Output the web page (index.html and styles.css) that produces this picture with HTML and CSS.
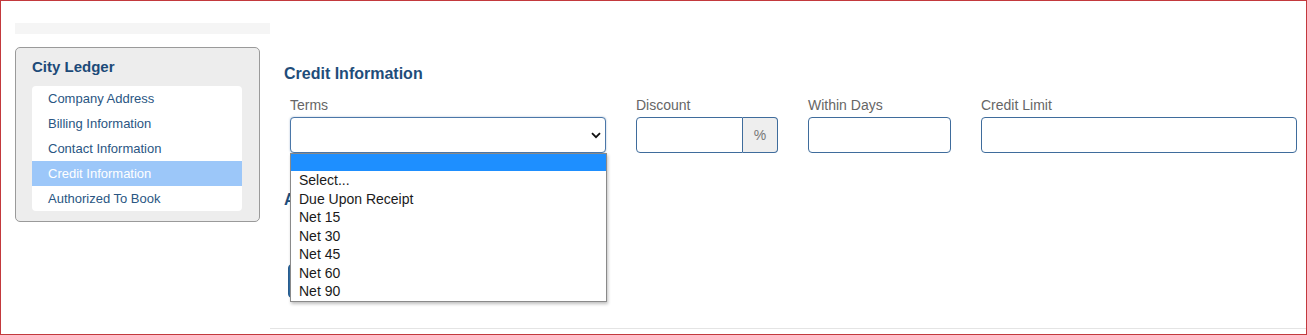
FILE: index.html
```html
<!DOCTYPE html>
<html lang="en">
<head>
    <meta charset="UTF-8">
    <meta name="viewport" content="width=device-width, initial-scale=1.0">
    <title>City Ledger - Credit Information</title>
    <link rel="stylesheet" href="styles.css">
</head>
<body>
    <div class="frame">
        <div class="sidebar">
            <div class="top-bar"></div>
            <div class="panel">
                <div class="panel-title">City Ledger</div>
                <ul class="nav-list">
                    <li>Company Address</li>
                    <li>Billing Information</li>
                    <li>Contact Information</li>
                    <li class="active">Credit Information</li>
                    <li>Authorized To Book</li>
                </ul>
            </div>
        </div>

        <div class="main">
            <h2 class="section-title">Credit Information</h2>
            <div class="field-row">
                <div class="field terms">
                    <label>Terms</label>
                    <div class="select">
                        <svg class="chevron" width="10" height="7" viewBox="0 0 10 7">
                            <path d="M1 1.2 L5 5.2 L9 1.2" fill="none" stroke="#111" stroke-width="1.8"/>
                        </svg>
                    </div>
                    <ul class="dropdown">
                        <li class="highlight">&nbsp;</li>
                        <li>Select...</li>
                        <li>Due Upon Receipt</li>
                        <li>Net 15</li>
                        <li>Net 30</li>
                        <li>Net 45</li>
                        <li>Net 60</li>
                        <li>Net 90</li>
                    </ul>
                </div>
                <div class="field">
                    <label>Discount</label>
                    <div class="input-group">
                        <div class="input"></div>
                        <div class="addon">%</div>
                    </div>
                </div>
                <div class="field">
                    <label>Within Days</label>
                    <div class="input"></div>
                </div>
                <div class="field">
                    <label>Credit Limit</label>
                    <div class="input"></div>
                </div>
            </div>

            <h2 class="section-title second">Authorized To Book</h2>
            <button class="add-btn">Add</button>
        </div>
    </div>
</body>
</html>
```

FILE: styles.css
```css
body {
    margin: 0;
    font-family: "Liberation Sans", Arial, sans-serif;
    background-color: #fff;
}

.frame {
    box-sizing: border-box;
    width: 1307px;
    height: 335px;
    border: 1px solid #c3393d;
    display: flex;
    padding: 22px 0 0 14px;
    overflow: hidden;
}

/* left column */
.sidebar {
    width: 255px;
    flex-shrink: 0;
}

.top-bar {
    height: 11px;
    background-color: #f5f5f5;
    margin-bottom: 13px;
}

.panel {
    width: 245px;
    box-sizing: border-box;
    height: 175px;
    background-color: #ededed;
    border: 1px solid #9a9a9a;
    border-radius: 5px;
    padding: 10px 17px 0 16px;
}

.panel-title {
    font-size: 15px;
    font-weight: bold;
    color: #1c4a78;
    line-height: 18px;
    margin-bottom: 10px;
}

.nav-list {
    list-style: none;
    margin: 0;
    padding: 0;
    background-color: #fff;
    border-radius: 4px;
    overflow: hidden;
}

.nav-list li {
    height: 25px;
    line-height: 25px;
    padding-left: 16px;
    font-size: 13px;
    color: #2a5683;
}

.nav-list li.active {
    background-color: #9cc7f9;
    color: #fff;
}

/* main column */
.main {
    flex: 1;
    height: 306px;
    border-bottom: 1px solid #e4e4e4;
    padding: 41px 0 0 14px;
    box-sizing: border-box;
}

.section-title {
    margin: 0 0 11px;
    font-size: 16px;
    line-height: 20px;
    font-weight: bold;
    color: #1f4d7a;
}

.section-title.second {
    margin-top: 37px;
}

.field-row {
    display: grid;
    grid-template-columns: 316px 142px 143px 316px;
    column-gap: 30px;
    margin-left: 6px;
}

.field {
    position: relative;
}

.field label {
    display: block;
    font-size: 14px;
    line-height: 20px;
    color: #666;
    margin-bottom: 2px;
}

.select,
.input {
    box-sizing: border-box;
    height: 36px;
    border: 1px solid #3f6c9c;
    border-radius: 4px;
    background-color: #fff;
}

.select {
    display: flex;
    align-items: center;
    justify-content: flex-end;
    padding-right: 4px;
    border-color: #4b77a8;
    box-shadow: 0 0 2px rgba(75, 119, 168, 0.5);
}

.input-group {
    display: flex;
}

.input-group .input {
    flex: 1;
    border-radius: 4px 0 0 4px;
}

.addon {
    box-sizing: border-box;
    width: 35px;
    height: 36px;
    line-height: 34px;
    text-align: center;
    font-size: 14px;
    color: #777;
    background-color: #eee;
    border: 1px solid #3f6c9c;
    border-left: none;
    border-radius: 0 4px 4px 0;
}

/* open list of the Terms select */
.dropdown {
    position: absolute;
    top: 58px;
    left: 0;
    width: 317px;
    box-sizing: border-box;
    margin: 0;
    padding: 0;
    list-style: none;
    background-color: #fff;
    border: 1px solid #8a8a8a;
    box-shadow: 1px 2px 3px rgba(0, 0, 0, 0.25);
    z-index: 2;
}

.dropdown li {
    height: 18.5px;
    line-height: 18.5px;
    padding-left: 8px;
    font-size: 14px;
    color: #1a1a1a;
}

.dropdown li.highlight {
    height: 17px;
    background-color: #1e8fff;
}

.add-btn {
    display: block;
    margin: 54px 0 0 4px;
    height: 34px;
    padding: 0 14px;
    font-family: inherit;
    font-size: 14px;
    color: #fff;
    background-color: #2e6da4;
    border: 1px solid #2a5d8f;
    border-radius: 4px;
}
```
